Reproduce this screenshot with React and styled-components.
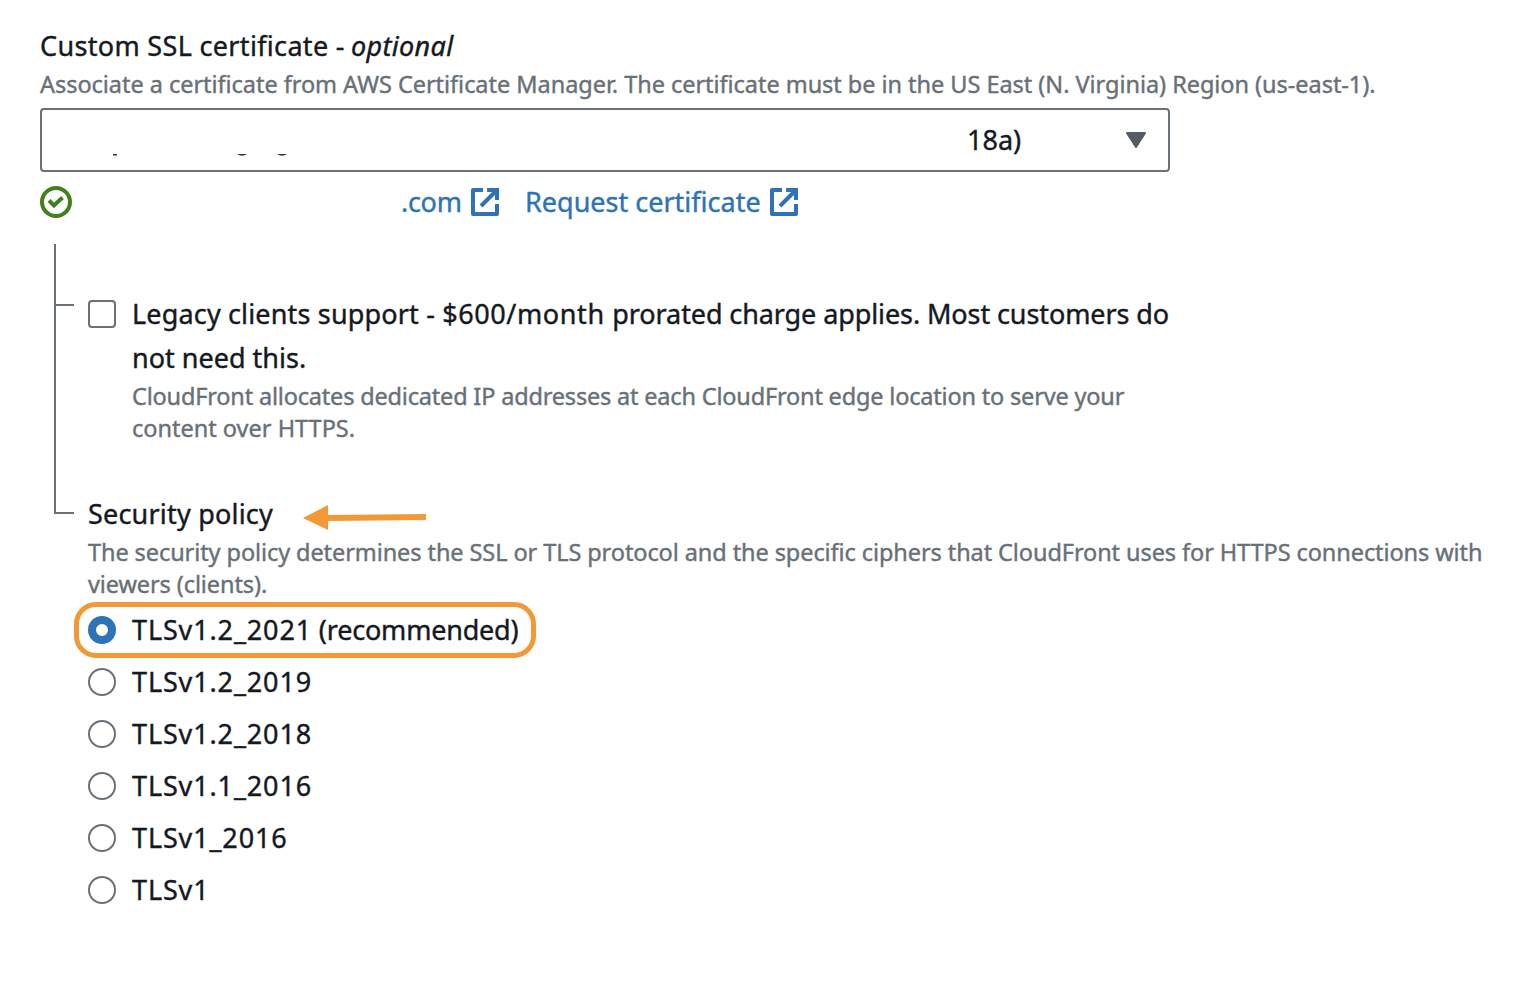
import React from "react";
import styled, { createGlobalStyle } from "styled-components";

const GlobalStyle = createGlobalStyle`
  * { box-sizing: border-box; }
  body {
    margin: 0;
    background: #fff;
    color: #16191f;
    font-family: "Noto Sans", "Open Sans", sans-serif;
    font-size: 27px;
    line-height: 44px;
    -webkit-text-stroke: 0.4px currentColor;
  }
`;

const Page = styled.main`
  width: 1530px;
  height: 996px;
  padding: 24px 40px;
  overflow: hidden;
`;

const Label = styled.div`
  display: flex;
  height: 44px;
  white-space: pre;
`;

const Line = styled.span`
  display: block;
  width: max-content;
  white-space: pre;
  letter-spacing: ${(p) => p.$spacing || 0}px;
`;

const Run = styled.span`
  letter-spacing: ${(p) => p.$spacing}px;
`;

const Optional = styled.em`
  margin-left: 6px;
  letter-spacing: 0.35px;
`;

const Description = styled.div`
  color: #687078;
  font-size: 23.5px;
  line-height: 32px;
`;

const Select = styled.div`
  position: relative;
  display: flex;
  align-items: center;
  justify-content: flex-end;
  width: 1130px;
  height: 64px;
  margin-top: 8px;
  padding-right: 22px;
  border: 2px solid #687078;
  border-radius: 4px;
`;

const SelectValue = styled.span`
  width: 55px;
  margin-right: 104px;
  white-space: pre;
`;

const Remnants = styled.svg`
  position: absolute;
  left: 71px;
  top: 44px;
`;

const StatusRow = styled.div`
  display: flex;
  align-items: center;
  height: 44px;
  margin-top: 8px;
`;

const Link = styled.a`
  display: flex;
  align-items: center;
  justify-content: space-between;
  width: ${(p) => p.$width}px;
  margin-left: ${(p) => p.$gap}px;
  color: #2e73b8;
`;

const Tree = styled.section`
  display: grid;
  grid-template-columns: 20px 1fr;
  column-gap: 14px;
  margin: 20px 0 0 14px;
`;

const Rail = styled.div`
  height: 270px;
  border-left: 2px solid #687078;
  border-bottom: 2px solid #687078;
`;

const Branch = styled.div`
  width: 18px;
  height: 62px;
  border-bottom: 2px solid #687078;
`;

const Options = styled.div`
  padding-top: 48px;
`;

const Choice = styled.div`
  display: grid;
  grid-template-columns: 28px 1fr;
  column-gap: 16px;
`;

const Checkbox = styled.span`
  width: 28px;
  height: 28px;
  margin-top: 8px;
  border: 2px solid #687078;
  border-radius: 4px;
`;

const Radio = styled.span`
  width: 28px;
  height: 28px;
  margin-top: 8px;
  border: ${(p) => (p.$checked ? "8px solid #2e73b8" : "2px solid #687078")};
  border-radius: 50%;
`;

const Policy = styled.div`
  margin-top: 48px;
`;

const PolicyTitle = styled(Label)`
  align-items: center;
  width: 340px;
`;

const Arrow = styled.svg`
  margin: 6px 0 0 auto;
`;

const RadioList = styled.div`
  display: grid;
  row-gap: 8px;
  margin-top: 8px;
`;

const RadioRow = styled(Choice)`
  position: relative;
  height: 44px;
`;

const Highlight = styled.span`
  position: absolute;
  left: -14px;
  top: -6px;
  width: 462px;
  height: 56px;
  border: 5.5px solid #f29836;
  border-radius: 22px;
`;

const ExternalIcon = () => (
  <svg width="32" height="32" viewBox="0 0 16 16" fill="none" stroke="currentColor" strokeWidth="2">
    <path d="M9.05 2H14v4.95M6 10l8-8" />
    <path d="M14 9v5H2V2h5" strokeLinejoin="round" />
  </svg>
);

const SuccessIcon = () => (
  <svg width="32" height="32" viewBox="0 0 32 32" fill="none" stroke="#3f8020" strokeWidth="4">
    <circle cx="16" cy="16" r="14" />
    <path d="M9 14.5l5 5 8.5-8" />
  </svg>
);

const policies = [
  { name: "TLSv1.2_2021", note: " (recommended)", checked: true },
  { name: "TLSv1.2_2019" },
  { name: "TLSv1.2_2018" },
  { name: "TLSv1.1_2016" },
  { name: "TLSv1_2016" },
  { name: "TLSv1" },
];

export default function App() {
  return (
    <Page>
      <GlobalStyle />
      <Label>
        <Line $spacing={0.33}>Custom SSL certificate -</Line>
        <Optional>optional</Optional>
      </Label>
      <Description>
        <Line $spacing={-0.04}>
          Associate a certificate from AWS Certificate Manager. The certificate must be in the US East (N. Virginia) Region (us-east-1).
        </Line>
      </Description>
      <Select>
        <Remnants width="180" height="2" viewBox="0 0 180 2" fill="#333740">
          <path d="M0 0h4v1.5H0zM124 0h10q-5 3.5-10 0zM164 0h10q-5 3.5-10 0z" />
        </Remnants>
        <SelectValue>18a)</SelectValue>
        <svg width="20" height="16" viewBox="0 0 20 16" fill="#545b64" stroke="#545b64" strokeWidth="2" strokeLinejoin="round">
          <path d="M1 1h18l-9 14z" />
        </svg>
      </Select>
      <StatusRow>
        <SuccessIcon />
        <Link $gap={329} $width={100}>
          <Line $spacing={-0.3}>.com</Line>
          <ExternalIcon />
        </Link>
        <Link $gap={24} $width={275}>
          <Line>Request certificate</Line>
          <ExternalIcon />
        </Link>
      </StatusRow>
      <Tree>
        <Rail>
          <Branch />
        </Rail>
        <Options>
          <Choice>
            <Checkbox />
            <div>
              <Line $spacing={-0.1}>
                <Run $spacing={0.16}>Legacy clients support - </Run>
                <Run $spacing={0.6}>$600/month </Run>
                prorated charge applies. Most customers do
              </Line>
              <Line>not need this.</Line>
              <Description>
                <Line $spacing={-0.18}>CloudFront allocates dedicated IP addresses at each CloudFront edge location to serve your</Line>
                <Line>content over HTTPS.</Line>
              </Description>
            </div>
          </Choice>
          <Policy>
            <PolicyTitle>
              <Line $spacing={0.2}>Security policy</Line>
              <Arrow width="125" height="26" viewBox="0 0 125 26" fill="#f29836">
                <path d="M0 14L25 1v10l98-1v6l-98 1v9z" />
              </Arrow>
            </PolicyTitle>
            <Description>
              <Line $spacing={-0.085}>
                The security policy determines the SSL or TLS protocol and the specific ciphers that CloudFront uses for HTTPS connections with
              </Line>
              <Line $spacing={-0.1}>viewers (clients).</Line>
            </Description>
            <RadioList>
              {policies.map((policy) => (
                <RadioRow key={policy.name}>
                  {policy.checked && <Highlight />}
                  <Radio $checked={policy.checked} />
                  <Line $spacing={0.87}>
                    {policy.name}
                    {policy.note && <Run $spacing={-0.2}>{policy.note}</Run>}
                  </Line>
                </RadioRow>
              ))}
            </RadioList>
          </Policy>
        </Options>
      </Tree>
    </Page>
  );
}
